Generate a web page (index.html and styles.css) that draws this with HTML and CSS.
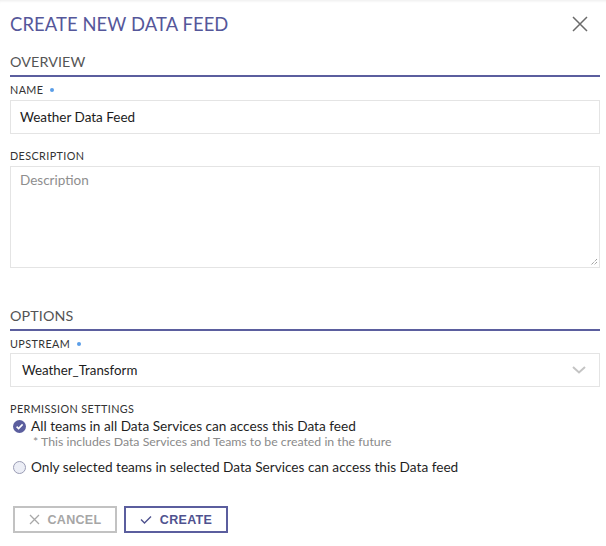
FILE: index.html
```html
<!DOCTYPE html>
<html>
<head>
<meta charset="utf-8">
<link rel="stylesheet" href="styles.css">
</head>
<body>
<div class="modal">
  <div class="header">
    <h1 class="title">CREATE NEW DATA FEED</h1>
    <svg class="close" width="16" height="16" viewBox="0 0 16 16"><path d="M1 1L15 15M15 1L1 15" stroke="#6b6b6b" stroke-width="1.5" fill="none"/></svg>
  </div>

  <div class="section-head">OVERVIEW</div>

  <div class="label">NAME <span class="dot"></span></div>
  <div class="input">Weather Data Feed</div>

  <div class="label label-desc">DESCRIPTION</div>
  <div class="textarea">
    <span class="placeholder">Description</span>
    <svg class="grip" width="8" height="8" viewBox="0 0 8 8"><path d="M7 1L1 7M7 4L4 7" stroke="#777" stroke-width="1" stroke-dasharray="1 1" fill="none"/></svg>
  </div>

  <div class="section-head section-options">OPTIONS</div>

  <div class="label">UPSTREAM <span class="dot"></span></div>
  <div class="input select">
    <span class="select-value">Weather_Transform</span>
    <svg width="14" height="8" viewBox="0 0 14 8"><path d="M1 1L7 6.5L13 1" stroke="#c4c4c4" stroke-width="2" fill="none"/></svg>
  </div>

  <div class="label label-perm">PERMISSION SETTINGS</div>
  <div class="radio-row">
    <svg class="radio" width="13" height="13" viewBox="0 0 13 13"><circle cx="6.5" cy="6.5" r="6.5" fill="#5b5e9e"/><path d="M3.6 6.6L5.6 8.6L9.6 4.4" stroke="#fff" stroke-width="1.6" fill="none"/></svg>
    <div>
      <div class="radio-text">All teams in all Data Services can access this Data feed</div>
      <div class="note">* This includes Data Services and Teams to be created in the future</div>
    </div>
  </div>
  <div class="radio-row radio-second">
    <svg class="radio" width="13" height="13" viewBox="0 0 13 13"><circle cx="6.5" cy="6.5" r="6" fill="#eceef6" stroke="#9a9cb4" stroke-width="1"/></svg>
    <div class="radio-text">Only selected teams in selected Data Services can access this Data feed</div>
  </div>

  <div class="buttons">
    <button class="btn btn-cancel"><svg width="11" height="11" viewBox="0 0 11 11"><path d="M1 1L10 10M10 1L1 10" stroke="#a8a8a8" stroke-width="1.3" fill="none"/></svg>CANCEL</button>
    <button class="btn btn-create"><svg width="12" height="9" viewBox="0 0 12 9"><path d="M1 4.5L4.5 8L11 1.5" stroke="#4f528f" stroke-width="1.4" fill="none"/></svg>CREATE</button>
  </div>
</div>
</body>
</html>
```

FILE: styles.css
```css
html, body {
  margin: 0;
  padding: 0;
  background: #fff;
}
body {
  font-family: Lato, "Open Sans", sans-serif;
  color: #222;
}
.modal {
  width: 606px;
  height: 546px;
  box-sizing: border-box;
  padding: 0 6px 0 10px;
  box-shadow: inset 0 3px 3px -2px rgba(0,0,0,0.08);
}
.header {
  display: flex;
  justify-content: space-between;
  align-items: center;
  height: 48px;
}
.title {
  margin: 0;
  font-weight: 400;
  font-size: 18.4px;
  color: #55579a;
  letter-spacing: 0.1px;
}
.close {
  margin-right: 12px;
  margin-top: -1px;
}
.section-head {
  font-size: 14.3px;
  color: #555;
  height: 27px;
  line-height: 27px;
  border-bottom: 2px solid #5b5e9e;
  letter-spacing: 0.1px;
}
.section-options {
  margin-top: 34px;
}
.label {
  font-size: 10.8px;
  color: #333;
  letter-spacing: 0.4px;
  margin-top: 6px;
  height: 13px;
  line-height: 13px;
  display: flex;
  align-items: center;
  gap: 7px;
}
.dot {
  width: 4px;
  height: 4px;
  border-radius: 50%;
  background: #5a9ee8;
}
.label-desc {
  margin-top: 15px;
}
.label-perm {
  margin-top: 15px;
}
.input {
  margin-top: 4px;
  height: 34px;
  box-sizing: border-box;
  border: 1px solid #e4e4e4;
  padding: 0 9px;
  display: flex;
  align-items: center;
  font-size: 13.5px;
  color: #1c1c1c;
}
.select {
  justify-content: space-between;
  padding: 0 13px 0 11px;
  margin-top: 3px;
}
.select-value {
  font-size: 13.3px;
}
.textarea {
  position: relative;
  margin-top: 4px;
  height: 102px;
  box-sizing: border-box;
  border: 1px solid #e4e4e4;
  padding: 5px 9px;
  font-size: 13.5px;
}
.placeholder {
  color: #8e8e8e;
}
.grip {
  position: absolute;
  right: 1px;
  bottom: 1px;
}
.radio-row {
  display: flex;
  align-items: flex-start;
  gap: 5px;
  margin-top: 4px;
  padding-left: 3px;
}
.radio-second {
  margin-top: 11px;
}
.radio {
  flex: none;
  margin-top: 1px;
}
.radio-text {
  font-size: 13.65px;
  color: #1f1f1f;
  line-height: 15px;
}
.note {
  font-size: 12.3px;
  line-height: 14px;
  color: #8a8a8a;
  margin-top: 1px;
  margin-left: 2px;
}
.buttons {
  display: flex;
  gap: 7px;
  margin-top: 31px;
  padding-left: 3px;
}
.btn {
  width: 104px;
  height: 27px;
  box-sizing: border-box;
  background: #fff;
  font-family: "Liberation Sans", Arial, sans-serif;
  font-weight: 700;
  font-size: 12.5px;
  letter-spacing: 0.3px;
  display: flex;
  align-items: center;
  justify-content: center;
  gap: 8px;
  padding: 0;
}
.btn-cancel {
  border: 2px solid #c2c2c2;
  color: #a6a6a6;
}
.btn-create {
  border: 2px solid #5b5e9e;
  color: #4f528f;
}
```
